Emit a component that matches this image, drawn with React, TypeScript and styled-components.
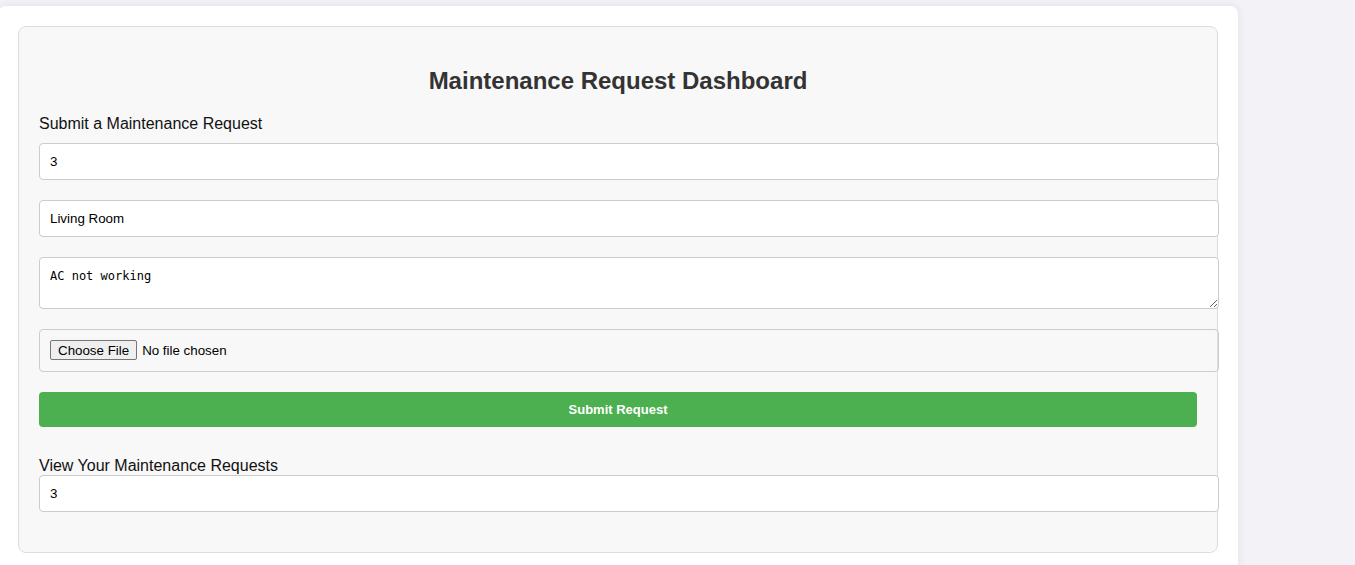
import React from "react";
import styled, { createGlobalStyle } from "styled-components";

const Global = createGlobalStyle`
  html, body {
    margin: 0;
    padding: 0;
    background: #f3f3f7;
    font-family: "Liberation Sans", Arial, sans-serif;
  }
`;

const Card = styled.div`
  background: #ffffff;
  width: 1200px;
  margin: 6px 0 0 -2px;
  padding: 20px;
  border-radius: 8px;
  box-shadow: 0 0 10px rgba(0, 0, 0, 0.08);
`;

const Panel = styled.div`
  background: #f8f8f8;
  border: 1px solid #dddddd;
  border-radius: 8px;
  padding: 20px;
  width: 1158px;
`;

const Title = styled.h2`
  margin: 20px 0 20px;
  font-size: 24px;
  line-height: 28px;
  font-weight: bold;
  color: #333333;
  text-align: center;
`;

const Label = styled.label<{ $gap: number }>`
  display: block;
  font-size: 16px;
  line-height: 18px;
  color: #111111;
  margin-bottom: ${(p) => p.$gap}px;
`;

const TextInput = styled.input`
  display: block;
  width: 100%;
  margin: 0 0 20px;
  padding: 10px;
  border: 1px solid #cccccc;
  border-radius: 4px;
  background: #ffffff;
  font-family: "Liberation Sans", Arial, sans-serif;
  font-size: 13.33px;
  line-height: 15px;
  height: 15px;
  color: #000000;
  outline: none;
`;

const TextArea = styled.textarea`
  display: block;
  width: 100%;
  margin: 0 0 20px;
  padding: 11px 10px 9px;
  border: 1px solid #cccccc;
  border-radius: 4px;
  background: #ffffff;
  font-family: "DejaVu Sans Mono", monospace;
  font-size: 12px;
  line-height: 15px;
  height: 30px;
  color: #000000;
  outline: none;
`;

const FileInput = styled.input`
  display: block;
  width: 100%;
  margin: 0 0 20px;
  padding: 10px;
  border: 1px solid #cccccc;
  border-radius: 4px;
  background: transparent;
  font-family: "Liberation Sans", Arial, sans-serif;
  font-size: 13.33px;
  height: 21px;
  color: #000000;

  &::file-selector-button {
    font-family: "Liberation Sans", Arial, sans-serif;
    font-size: 13.33px;
    padding: 1px 7px;
    margin-right: 5px;
    border: 1px solid #767676;
    border-radius: 2px;
    background: #efefef;
    color: #000;
    height: 20px;
  }
`;

const SubmitButton = styled.button`
  display: block;
  width: 100%;
  height: 35px;
  margin: 0 0 30px;
  border: none;
  border-radius: 4px;
  background: #4caf50;
  color: #ffffff;
  font-family: "Liberation Sans", Arial, sans-serif;
  font-size: 13px;
  font-weight: bold;
  cursor: pointer;
`;

export default function App() {
  return (
    <>
      <Global />
      <Card>
        <Panel>
          <Title>Maintenance Request Dashboard</Title>
          <Label $gap={10}>Submit a Maintenance Request</Label>
          <TextInput defaultValue="3" />
          <TextInput defaultValue="Living Room" />
          <TextArea defaultValue="AC not working" />
          <FileInput type="file" />
          <SubmitButton>Submit Request</SubmitButton>
          <Label $gap={0}>View Your Maintenance Requests</Label>
          <TextInput defaultValue="3" />
        </Panel>
      </Card>
    </>
  );
}
